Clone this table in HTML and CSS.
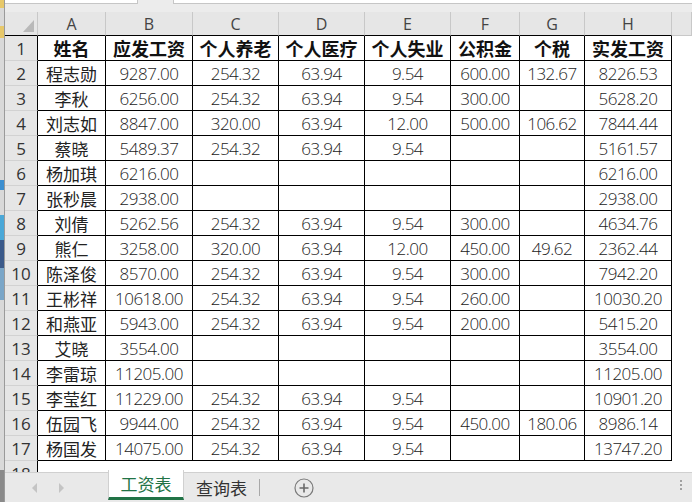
FILE: index.html
```html
<!DOCTYPE html>
<html lang="zh">
<head>
<meta charset="utf-8">
<link rel="stylesheet" href="styles.css">
</head>
<body>
<div class="app">
  <div class="edge"></div>
  <div class="main">
    <div class="topbar">
      <div class="namebox"></div>
      <div class="gap"></div>
      <div class="formula"></div>
    </div>
    <div class="sheet">
      <div class="corner"><div class="tri"></div></div>
      <div class="ch b">A</div><div class="ch b">B</div><div class="ch b">C</div><div class="ch b">D</div><div class="ch b">E</div><div class="ch b">F</div><div class="ch b">G</div><div class="ch b">H</div><div class="ch"></div>

      <div class="rh">1</div><div class="c h">姓名</div><div class="c h">应发工资</div><div class="c h">个人养老</div><div class="c h">个人医疗</div><div class="c h">个人失业</div><div class="c h">公积金</div><div class="c h">个税</div><div class="c h">实发工资</div><div class="x"></div>
      <div class="rh">2</div><div class="c">程志勋</div><div class="c n">9287.00</div><div class="c n">254.32</div><div class="c n">63.94</div><div class="c n">9.54</div><div class="c n">600.00</div><div class="c n">132.67</div><div class="c n">8226.53</div><div class="x"></div>
      <div class="rh">3</div><div class="c">李秋</div><div class="c n">6256.00</div><div class="c n">254.32</div><div class="c n">63.94</div><div class="c n">9.54</div><div class="c n">300.00</div><div class="c n"></div><div class="c n">5628.20</div><div class="x"></div>
      <div class="rh">4</div><div class="c">刘志如</div><div class="c n">8847.00</div><div class="c n">320.00</div><div class="c n">63.94</div><div class="c n">12.00</div><div class="c n">500.00</div><div class="c n">106.62</div><div class="c n">7844.44</div><div class="x"></div>
      <div class="rh">5</div><div class="c">蔡晓</div><div class="c n">5489.37</div><div class="c n">254.32</div><div class="c n">63.94</div><div class="c n">9.54</div><div class="c n"></div><div class="c n"></div><div class="c n">5161.57</div><div class="x"></div>
      <div class="rh">6</div><div class="c">杨加琪</div><div class="c n">6216.00</div><div class="c n"></div><div class="c n"></div><div class="c n"></div><div class="c n"></div><div class="c n"></div><div class="c n">6216.00</div><div class="x"></div>
      <div class="rh">7</div><div class="c">张秒晨</div><div class="c n">2938.00</div><div class="c n"></div><div class="c n"></div><div class="c n"></div><div class="c n"></div><div class="c n"></div><div class="c n">2938.00</div><div class="x"></div>
      <div class="rh">8</div><div class="c">刘倩</div><div class="c n">5262.56</div><div class="c n">254.32</div><div class="c n">63.94</div><div class="c n">9.54</div><div class="c n">300.00</div><div class="c n"></div><div class="c n">4634.76</div><div class="x"></div>
      <div class="rh">9</div><div class="c">熊仁</div><div class="c n">3258.00</div><div class="c n">320.00</div><div class="c n">63.94</div><div class="c n">12.00</div><div class="c n">450.00</div><div class="c n">49.62</div><div class="c n">2362.44</div><div class="x"></div>
      <div class="rh">10</div><div class="c">陈泽俊</div><div class="c n">8570.00</div><div class="c n">254.32</div><div class="c n">63.94</div><div class="c n">9.54</div><div class="c n">300.00</div><div class="c n"></div><div class="c n">7942.20</div><div class="x"></div>
      <div class="rh">11</div><div class="c">王彬祥</div><div class="c n">10618.00</div><div class="c n">254.32</div><div class="c n">63.94</div><div class="c n">9.54</div><div class="c n">260.00</div><div class="c n"></div><div class="c n">10030.20</div><div class="x"></div>
      <div class="rh">12</div><div class="c">和燕亚</div><div class="c n">5943.00</div><div class="c n">254.32</div><div class="c n">63.94</div><div class="c n">9.54</div><div class="c n">200.00</div><div class="c n"></div><div class="c n">5415.20</div><div class="x"></div>
      <div class="rh">13</div><div class="c">艾晓</div><div class="c n">3554.00</div><div class="c n"></div><div class="c n"></div><div class="c n"></div><div class="c n"></div><div class="c n"></div><div class="c n">3554.00</div><div class="x"></div>
      <div class="rh">14</div><div class="c">李雷琼</div><div class="c n">11205.00</div><div class="c n"></div><div class="c n"></div><div class="c n"></div><div class="c n"></div><div class="c n"></div><div class="c n">11205.00</div><div class="x"></div>
      <div class="rh">15</div><div class="c">李莹红</div><div class="c n">11229.00</div><div class="c n">254.32</div><div class="c n">63.94</div><div class="c n">9.54</div><div class="c n"></div><div class="c n"></div><div class="c n">10901.20</div><div class="x"></div>
      <div class="rh">16</div><div class="c">伍园飞</div><div class="c n">9944.00</div><div class="c n">254.32</div><div class="c n">63.94</div><div class="c n">9.54</div><div class="c n">450.00</div><div class="c n">180.06</div><div class="c n">8986.14</div><div class="x"></div>
      <div class="rh">17</div><div class="c">杨国发</div><div class="c n">14075.00</div><div class="c n">254.32</div><div class="c n">63.94</div><div class="c n">9.54</div><div class="c n"></div><div class="c n"></div><div class="c n">13747.20</div><div class="x"></div>
      <div class="rh">18</div><div class="e"></div><div class="e"></div><div class="e"></div><div class="e"></div><div class="e"></div><div class="e"></div><div class="e"></div><div class="e"></div><div class="x"></div>
    </div>
    <div class="tabbar">
      <div class="nav">
        <span class="arrow left"></span>
        <span class="arrow right"></span>
      </div>
      <div class="tab active">工资表</div>
      <div class="tab">查询表</div>
      <div class="sep"></div>
      <div class="add">
        <svg width="20" height="20" viewBox="0 0 20 20"><circle cx="10" cy="10" r="9" fill="none" stroke="#7a7a7a" stroke-width="1.2"/><path d="M10 5.5v9M5.5 10h9" stroke="#6a6a6a" stroke-width="1.6"/></svg>
      </div>
      <div class="spacer"></div>
      <div class="dots"><i></i><i></i><i></i></div>
    </div>
  </div>
</div>
</body>
</html>
```

FILE: styles.css
```css
html, body {
  margin: 0;
  padding: 0;
  background: #ffffff;
}
body {
  width: 692px;
  height: 502px;
  overflow: hidden;
  font-family: "Noto Sans CJK SC", "Noto Sans", sans-serif;
}
.app {
  display: flex;
  width: 692px;
  height: 502px;
}
.edge {
  width: 5px;
  flex: 0 0 5px;
  background: linear-gradient(to bottom,
    #e7c86a 0px, #e7c86a 8px, #d9d9d9 8px, #d9d9d9 26px,
    #e7c86a 26px, #e7c86a 38px, #d9d9d9 38px, #d9d9d9 180px,
    #3d8fd0 180px, #3d8fd0 190px, #d9d9d9 190px, #d9d9d9 215px,
    #4aa8d8 215px, #4aa8d8 240px, #3b5a8a 240px, #3b5a8a 268px,
    #7aa6c8 268px, #7aa6c8 300px, #d9d9d9 300px, #d9d9d9 470px,
    #8a8a8a 470px, #8a8a8a 502px);
  border-right: 1px solid #9a9a9a;
  box-sizing: border-box;
}
.main {
  flex: 1;
  display: flex;
  flex-direction: column;
  min-width: 0;
}
.topbar {
  height: 12px;
  flex: 0 0 12px;
  background: #ececec;
  display: flex;
  align-items: flex-start;
}
.namebox {
  width: 132px;
  height: 3px;
  background: #fff;
  border-bottom: 1px solid #c6c6c6;
  border-right: 1px solid #c6c6c6;
}
.gap { width: 35px; }
.formula {
  flex: 1;
  height: 3px;
  background: #fff;
  border-bottom: 1px solid #c6c6c6;
  border-left: 1px solid #c6c6c6;
}
.sheet {
  height: 460px;
  flex: 0 0 460px;
  overflow: hidden;
  display: grid;
  grid-template-columns: 33px 68px 87px 86px 86px 86px 69px 65px 87px 20px;
  grid-template-rows: 24px repeat(18, 25px);
}
.sheet > div {
  box-sizing: border-box;
  display: flex;
  align-items: center;
  justify-content: center;
  white-space: nowrap;
  overflow: hidden;
}
.corner {
  background: #e6e6e6;
  border-right: 1px solid #c8c8c8;
  border-bottom: 1px solid #000;
  justify-content: flex-end !important;
  align-items: flex-end !important;
  padding: 0 3px 3px 0;
}
.tri {
  width: 11px;
  height: 12px;
  background: #b9b9b9;
  clip-path: polygon(100% 0, 100% 100%, 0 100%);
}
.ch {
  background: #e6e6e6;
  border-right: 1px solid #c8c8c8;
  border-bottom: 1px solid #c8c8c8;
  color: #444;
  font-family: "Open Sans", "Noto Sans", sans-serif;
  font-size: 16px;
}
.ch.b { border-bottom-color: #000; }
.rh {
  background: #e6e6e6;
  border-right: 1px solid #000;
  border-bottom: 1px solid #d2d2d2;
  color: #333;
  font-family: "Open Sans", "Noto Sans", sans-serif;
  font-size: 17px;
}
.c {
  border-right: 1px solid #000;
  border-bottom: 1px solid #000;
  color: #222;
  font-size: 17px;
}
.c.h {
  font-weight: 700;
  color: #111;
  font-size: 18px;
}
.c.n {
  font-family: "Open Sans", "Noto Sans", sans-serif;
  font-weight: 300;
  font-size: 17px;
  letter-spacing: -0.5px;
  color: #222;
}
.x, .e { background: #fff; }
.tabbar {
  height: 30px;
  flex: 0 0 30px;
  background: #e9e9e9;
  border-top: 1px solid #d0d0d0;
  box-sizing: border-box;
  display: flex;
  align-items: center;
}
.nav {
  width: 103px;
  display: flex;
  align-items: center;
  padding-left: 27px;
  gap: 22px;
  box-sizing: border-box;
}
.arrow {
  width: 0;
  height: 0;
  border-top: 5px solid transparent;
  border-bottom: 5px solid transparent;
}
.arrow.left { border-right: 5px solid #c4c4c4; }
.arrow.right { border-left: 5px solid #c4c4c4; }
.tab {
  height: 27px;
  padding: 0 12px;
  font-size: 17px;
  color: #333;
  display: flex;
  align-items: center;
  box-sizing: border-box;
  white-space: nowrap;
}
.tab.active {
  align-self: flex-start;
  margin-top: -3px;
  height: 30px;
  width: 76px;
  padding: 0;
  justify-content: center;
  background: #fff;
  color: #217346;
  border-bottom: 3px solid #217346;
  border-left: 1px solid #d0d0d0;
  border-right: 1px solid #d0d0d0;
}
.sep {
  width: 1px;
  height: 17px;
  background: #a8a8a8;
}
.add {
  margin-left: 34px;
  display: flex;
  align-items: center;
}
.spacer { flex: 1; }
.dots {
  display: flex;
  flex-direction: column;
  gap: 2px;
  margin-right: 10px;
  margin-top: -6px;
}
.dots i {
  display: block;
  width: 2px;
  height: 2px;
  background: #a0a0a0;
}
```
